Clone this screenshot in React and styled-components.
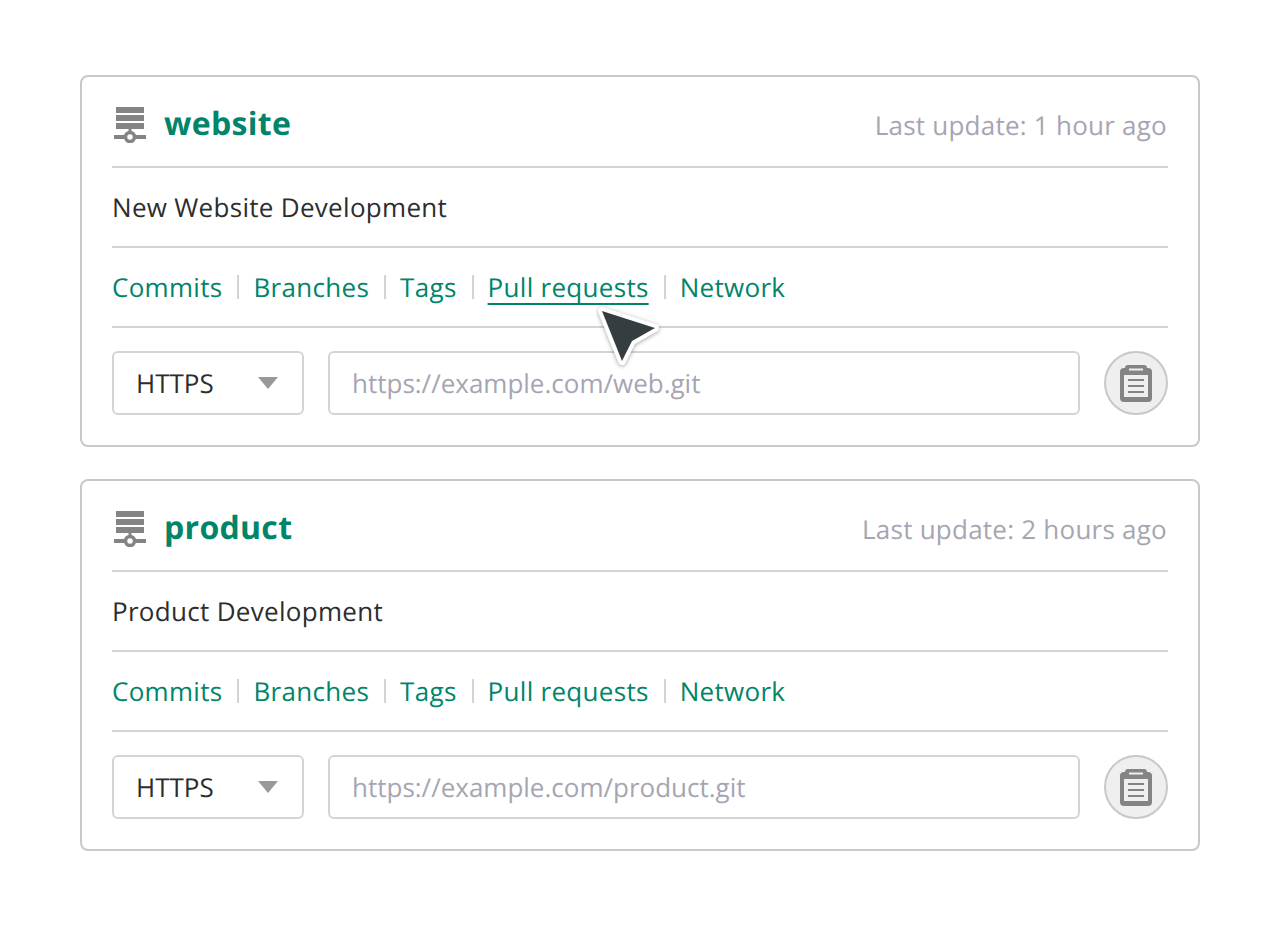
import styled, { createGlobalStyle } from "styled-components";

const GlobalStyle = createGlobalStyle`
  html, body {
    margin: 0;
    padding: 0;
    background: #fff;
    font-family: "Open Sans", sans-serif;
    text-rendering: geometricPrecision;
  }
`;

const Page = styled.div`
  width: 1280px;
  height: 928px;
  box-sizing: border-box;
  padding: 75px 80px 0;
  display: flex;
  flex-direction: column;
  gap: 32px;
`;

const Card = styled.section`
  position: relative;
  box-sizing: border-box;
  height: 372px;
  padding: 0 30px;
  border: 2px solid #c8c8cc;
  border-radius: 8px;
  background: #fff;
`;

const Row = styled.div`
  box-sizing: border-box;
  height: 80px;
  display: flex;
  align-items: center;
  border-bottom: 2px solid #d4d4d8;
`;

const HeaderRow = styled(Row)`
  height: 91px;
  justify-content: space-between;
`;

const Title = styled.div`
  display: flex;
  align-items: center;
  gap: 18px;
  margin-top: 4px;
  padding-left: 2px;
`;

const Name = styled.h2`
  margin: 0;
  font-size: 32px;
  font-weight: 700;
  line-height: 40px;
  letter-spacing: 0.3px;
  color: #00856a;
`;

const Updated = styled.span`
  font-size: 26px;
  letter-spacing: 0.24px;
  color: #a5a5b3;
  margin-top: 6px;
  padding-right: 1px;
`;

const Description = styled.p`
  margin: 0;
  font-size: 26px;
  letter-spacing: 0.3px;
  color: #2d2d2d;
`;

const Links = styled.nav`
  display: flex;
  align-items: center;
`;

const LinkItem = styled.a`
  position: relative;
  font-size: 26px;
  line-height: 36px;
  letter-spacing: 0.3px;
  color: #00856a;
  padding-right: 17px;
  margin-right: 14px;
  ${(p) => p.$active && "text-decoration: underline; text-underline-offset: 6px; text-decoration-thickness: 2px; text-decoration-skip-ink: none;"}
  &:not(:last-child)::after {
    content: "";
    position: absolute;
    right: 0;
    top: 6px;
    height: 24px;
    width: 2px;
    background: #d4d4d8;
  }
`;

const Controls = styled.div`
  display: flex;
  align-items: center;
  gap: 24px;
  margin-top: 23px;
`;

const Select = styled.div`
  box-sizing: border-box;
  width: 192px;
  height: 64px;
  padding: 0 24px 0 22px;
  display: flex;
  align-items: center;
  justify-content: space-between;
  border: 2px solid #d4d4d8;
  border-radius: 6px;
  font-size: 26px;
  color: #2d2d2d;
`;

const Caret = styled.span`
  width: 0;
  height: 0;
  border-left: 10.5px solid transparent;
  border-right: 10.5px solid transparent;
  border-top: 12px solid #999;
`;

const UrlField = styled.div`
  box-sizing: border-box;
  width: 752px;
  height: 64px;
  padding: 0 22px;
  display: flex;
  align-items: center;
  border: 2px solid #d4d4d8;
  border-radius: 6px;
  font-size: 26px;
  color: #a5a5b3;
`;

const CopyButton = styled.button`
  box-sizing: border-box;
  width: 64px;
  height: 64px;
  padding: 0;
  display: flex;
  align-items: center;
  justify-content: center;
  border: 2px solid #c8c8cc;
  border-radius: 50%;
  background: #efefef;
`;

const Cursor = styled.svg`
  position: absolute;
  left: 514px;
  top: 228px;
`;

const RepoSvg = styled.svg`
  display: block;
  margin-top: 3px;
`;

const RepoIcon = () => (
  <RepoSvg width="32" height="36" viewBox="0 0 32 36" fill="#848484">
    <rect x="2" y="0" width="28" height="6" />
    <rect x="2" y="8" width="28" height="6" />
    <rect x="2" y="16" width="28" height="6" />
    <rect x="14.5" y="22" width="3" height="6" />
    <rect x="0" y="28" width="32" height="4" />
    <circle cx="16" cy="30" r="4.5" fill="#fff" stroke="#848484" strokeWidth="3.5" />
  </RepoSvg>
);

const ClipboardIcon = () => (
  <svg width="32" height="37" viewBox="0 0 32 37">
    <rect x="0" y="3" width="32" height="34" rx="4" fill="#848484" />
    <rect x="4" y="10" width="24" height="22" fill="#efefef" />
    <rect x="5" y="0" width="22" height="10" rx="3" fill="#848484" />
    <rect x="9" y="3.5" width="14" height="2" fill="#efefef" />
    <rect x="8" y="14" width="16" height="2" fill="#848484" />
    <rect x="8" y="20" width="16" height="2" fill="#848484" />
    <rect x="8" y="26" width="16" height="2" fill="#848484" />
  </svg>
);

const repos = [
  { name: "website", updated: "Last update: 1 hour ago", desc: "New Website Development", url: "https://example.com/web.git", active: true },
  { name: "product", updated: "Last update: 2 hours ago", desc: "Product Development", url: "https://example.com/product.git" },
];

const tabs = ["Commits", "Branches", "Tags", "Pull requests", "Network"];

const App = () => {
  return (
    <Page>
      <GlobalStyle />
      {repos.map((repo) => (
        <Card key={repo.name}>
          <HeaderRow>
            <Title>
              <RepoIcon />
              <Name>{repo.name}</Name>
            </Title>
            <Updated>{repo.updated}</Updated>
          </HeaderRow>
          <Row>
            <Description>{repo.desc}</Description>
          </Row>
          <Row>
            <Links>
              {tabs.map((tab) => (
                <LinkItem key={tab} $active={repo.active && tab === "Pull requests"}>
                  {tab}
                </LinkItem>
              ))}
            </Links>
          </Row>
          <Controls>
            <Select>
              HTTPS
              <Caret />
            </Select>
            <UrlField>{repo.url}</UrlField>
            <CopyButton>
              <ClipboardIcon />
            </CopyButton>
          </Controls>
          {repo.active && (
            <Cursor width="72" height="72" viewBox="0 0 72 72">
              <path
                d="M6 6 L59 23 L36 36 L26 56 Z"
                fill="#363d40"
                stroke="#fff"
                strokeWidth="8"
                strokeLinejoin="round"
                paintOrder="stroke"
                style={{ filter: "drop-shadow(0 1px 2px rgba(0,0,0,.35))" }}
              />
            </Cursor>
          )}
        </Card>
      ))}
    </Page>
  );
};

export default App;
